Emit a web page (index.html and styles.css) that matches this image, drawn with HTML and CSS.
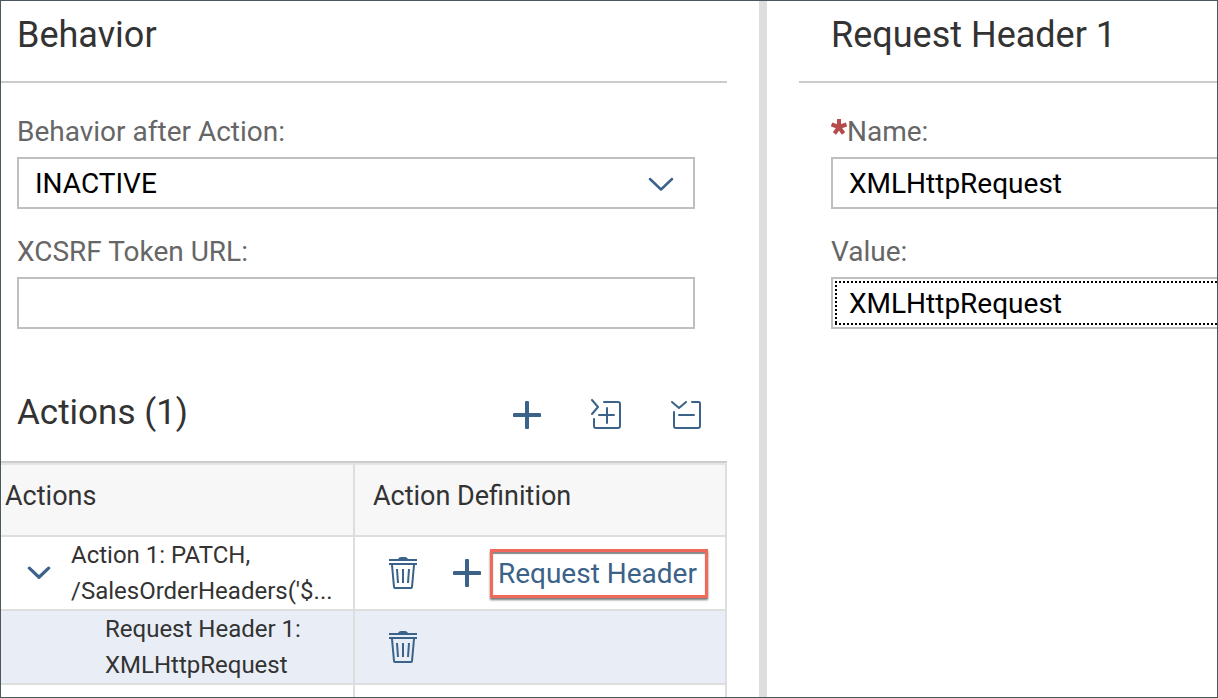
FILE: index.html
```html
<!DOCTYPE html>
<html lang="en">
<head>
<meta charset="utf-8">
<title>Behavior</title>
<link rel="stylesheet" href="styles.css">
</head>
<body>
<svg class="sprite" aria-hidden="true">
  <symbol id="plus" viewBox="0 0 28 28"><path d="M14 1.500v25M1.500 14h25" fill="none" stroke="currentColor" stroke-width="4" stroke-linecap="round"/></symbol>
  <symbol id="trash" viewBox="0 0 28 32">
    <path d="M9 2q1-2 3-2h4q2 0 3 2h9v2H0V2zM0 6h28v2H0z" fill="currentColor"/>
    <path d="M3 8l2 22q0 1 1 1h16q1 0 1-1l2-22M8 12l1 14M14 12v14M20 12l-1 14" fill="none" stroke="currentColor" stroke-width="2"/>
  </symbol>
</svg>
<main class="split">
  <section class="pane">
    <h1 class="title">Behavior</h1>
    <form class="form">
      <label class="label" for="after">Behavior after Action:</label>
      <div class="picker">
        <select class="field" id="after"><option>INACTIVE</option></select>
        <svg class="picker-arrow" viewBox="0 0 26 14" aria-hidden="true"><path d="M2 2l11 10.500L24 2" fill="none" stroke="currentColor" stroke-width="2.500" stroke-linecap="round" stroke-linejoin="round"/></svg>
      </div>
      <label class="label" for="token">XCSRF Token URL:</label>
      <input class="field" id="token" type="text">
    </form>
    <div class="toolbar">
      <h2 class="toolbar-title">Actions (1)</h2>
      <button class="icon-button" type="button" aria-label="Add action"><svg class="plus"><use href="#plus"/></svg></button>
      <button class="icon-button" type="button" aria-label="Expand all"><svg class="tree-icon" viewBox="0 0 32 32"><path d="M1 1l6 7-6 7M13 3h14q2 0 2 2v22q0 2-2 2H5q-2 0-2-2v-7M8 16h15M16 9v15" fill="none" stroke="currentColor" stroke-width="2" stroke-linecap="round" stroke-linejoin="round"/></svg></button>
      <button class="icon-button" type="button" aria-label="Collapse all"><svg class="tree-icon" viewBox="0 0 32 32"><path d="M1 3l7 6 7-6M21 3h7q1 0 1 2v22q0 2-2 2H5q-2 0-2-2V13M8 16h15" fill="none" stroke="currentColor" stroke-width="2" stroke-linecap="round" stroke-linejoin="round"/></svg></button>
    </div>
    <table class="tree">
      <thead>
        <tr><th>Actions</th><th class="definition">Action Definition</th></tr>
      </thead>
      <tbody>
        <tr>
          <td>
            <div class="node">
              <button class="expander" type="button" aria-label="Collapse Action 1" aria-expanded="true"><svg class="expander-icon" viewBox="0 0 22 14" aria-hidden="true"><path d="M2 2l9 8.500L20 2" fill="none" stroke="currentColor" stroke-width="3" stroke-linecap="round" stroke-linejoin="round"/></svg></button>
              <span class="node-text">Action 1: PATCH,<br>/SalesOrderHeaders('$...</span>
            </div>
          </td>
          <td class="definition">
            <div class="commands">
              <button class="command" type="button" aria-label="Delete Action 1"><svg class="trash"><use href="#trash"/></svg></button>
              <button class="command" type="button"><svg class="plus" aria-hidden="true"><use href="#plus"/></svg><span class="marked">Request Header</span></button>
            </div>
          </td>
        </tr>
        <tr class="selected">
          <td><div class="node child"><span class="node-text">Request Header 1:<br>XMLHttpRequest</span></div></td>
          <td class="definition">
            <div class="commands">
              <button class="command" type="button" aria-label="Delete Request Header 1"><svg class="trash"><use href="#trash"/></svg></button>
            </div>
          </td>
        </tr>
        <tr><td></td><td></td></tr>
      </tbody>
    </table>
  </section>
  <div class="splitter"></div>
  <section class="pane detail">
    <h1 class="title">Request Header 1</h1>
    <form class="form">
      <label class="label" for="name"><svg class="required" viewBox="0 0 16 16" aria-hidden="true"><path d="M8 8V0M8 8L0.500 5.500M8 8l7.500-2.500M8 8l-4.500 6.500M8 8l4.500 6.500" stroke="currentColor" stroke-width="4"/></svg>Name:</label>
      <input class="field" id="name" type="text" value="XMLHttpRequest" required>
      <label class="label" for="value">Value:</label>
      <input class="field current" id="value" type="text" value="XMLHttpRequest">
    </form>
  </section>
</main>
</body>
</html>
```
FILE: styles.css
```css
* { box-sizing: border-box; }

body {
  margin: 0;
  background: #fff;
  color: #333;
  font: 28px/36px Roboto, "Liberation Sans", sans-serif;
}

.sprite { display: none; }

.split {
  display: grid;
  grid-template-columns: 758fr 8px 450fr;
  height: 100vh;
  border: 1px solid #4a5660;
  overflow: hidden;
}

.pane { min-width: 0; padding-right: 32px; }
.detail { padding: 0 0 0 32px; }
.splitter { background: #dedede; }

.title {
  margin: 0;
  padding: 12px 16px 24px;
  border-bottom: 2px solid #ccc;
  font-size: 36px;
  font-weight: 400;
  line-height: 44px;
}

.form {
  display: flex;
  flex-direction: column;
  padding: 32px 32px 0 16px;
}

.detail .title { padding-left: 32px; }
.detail .form { padding: 32px 0 0 32px; }

.label { margin-bottom: 8px; color: #666; line-height: 34px; }

.field {
  width: 100%;
  height: 52px;
  margin: 0 0 26px;
  padding: 0 16px;
  border: 2px solid #bfbfbf;
  border-radius: 0;
  background: #fff;
  color: #000;
  font: inherit;
  appearance: none;
}

.detail .field { border-right: 0; }

.current {
  background:
    repeating-linear-gradient(90deg, #000 0 2px, #fff 2px 4px) 2px 2px / 100% 2px no-repeat,
    repeating-linear-gradient(90deg, #000 0 2px, #fff 2px 4px) 2px 44px / 100% 2px no-repeat,
    repeating-linear-gradient(#000 0 2px, #fff 2px 4px) 2px 2px / 2px 44px no-repeat;
}

.picker { position: relative; color: #3b6288; }
.picker .field { padding-top: 2px; }

.picker-arrow {
  position: absolute;
  top: 20px;
  right: 21px;
  width: 26px;
  height: 14px;
  pointer-events: none;
}

button {
  padding: 0;
  border: 0;
  background: none;
  color: #3b6288;
  font: inherit;
}

svg { display: block; }

.required {
  display: inline-block;
  width: 16px;
  height: 16px;
  color: #b54b4b;
  vertical-align: 6px;
}

.toolbar {
  display: flex;
  align-items: center;
  height: 96px;
  margin-top: 10px;
  padding-left: 16px;
}

.toolbar-title {
  flex: 1;
  margin: 0;
  font-size: 35px;
  font-weight: 400;
  line-height: 44px;
}

.icon-button {
  display: grid;
  place-items: center;
  width: 80px;
  height: 72px;
  padding-top: 4px;
}

.plus { flex: none; width: 28px; height: 28px; }
.tree-icon { width: 32px; height: 32px; }

.tree {
  width: 100%;
  border-top: 2px solid #ccc;
  border-spacing: 0;
  table-layout: fixed;
}

.tree th, .tree td {
  height: 74px;
  padding: 0;
  border: solid #dedede;
  border-width: 0 2px 2px 0;
  text-align: left;
}

.tree th:first-child, .tree td:first-child { width: 48.75%; }

.tree th {
  padding: 0 4px 8px;
  border-top: 2px solid #e5e5e5;
  background: #f7f7f7;
  font-size: 27px;
  font-weight: 400;
}

.tree th.definition { padding-left: 18px; }
.selected { background: #e9eef6; }

.node { display: flex; align-items: center; padding-left: 26px; }
.child { padding-left: 104px; }
.node-text { font-size: 24px; white-space: nowrap; }

.expander { width: 44px; height: 44px; }
.expander-icon { width: 24px; height: 15px; }

.commands { display: flex; align-items: center; padding-left: 34px; gap: 36px; }
.command { display: flex; align-items: center; gap: 9px; }
.trash { width: 28px; height: 32px; }

.marked {
  padding: 4px 8px 3px 5px;
  border: 3px solid #f0695a;
  box-shadow: 0 2px 2px #777, inset 0 2px 1px #888;
}
```
